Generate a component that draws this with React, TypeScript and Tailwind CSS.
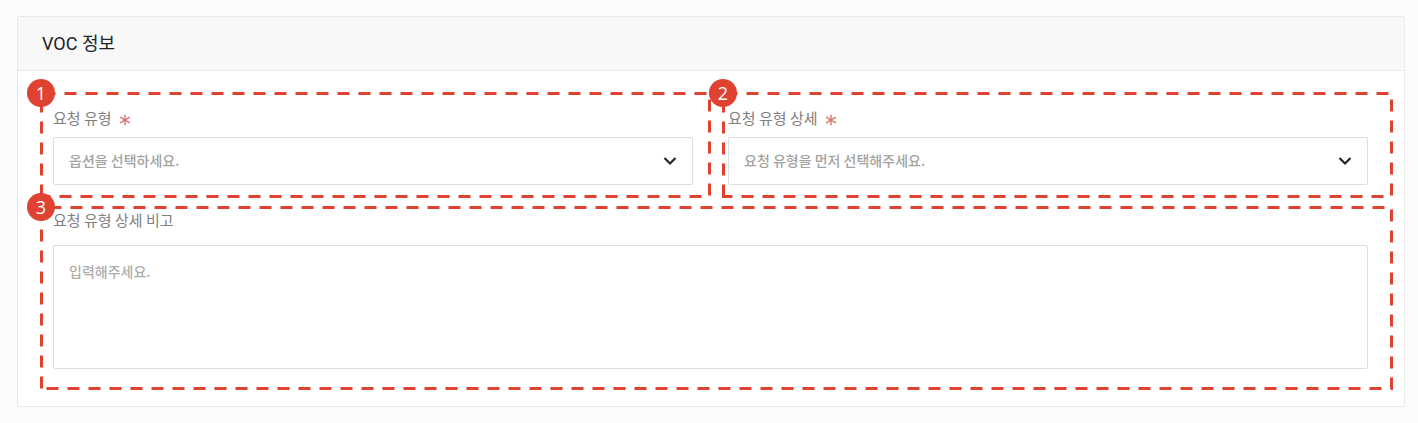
import { useLayoutEffect, useRef, useState, type ReactNode } from "react";

function DashedOutline() {
  const ref = useRef<SVGSVGElement>(null);
  const [size, setSize] = useState({ w: 0, h: 0 });

  useLayoutEffect(() => {
    const svg = ref.current;
    if (!svg) return;
    const measure = () => {
      const box = svg.getBoundingClientRect();
      setSize({ w: box.width, h: box.height });
    };
    measure();
    const observer = new ResizeObserver(measure);
    observer.observe(svg);
    return () => observer.disconnect();
  }, []);

  const right = size.w - 1.5;
  const bottom = size.h - 1.5;

  return (
    <svg ref={ref} aria-hidden="true" className="pointer-events-none absolute inset-0 h-full w-full">
      {size.w > 0 && (
        <path
          d={`M1.5 ${bottom}V1.5H${right}V${bottom}Z`}
          fill="none"
          stroke="#df4230"
          strokeWidth="3"
          strokeDasharray="12 9"
        />
      )}
    </svg>
  );
}

function Callout({ number, className, children }: { number: number; className: string; children: ReactNode }) {
  return (
    <div className={`relative ${className}`}>
      {children}
      <DashedOutline />
      <span className="absolute -left-[13px] -top-[13px] z-10 flex size-7 items-center justify-center rounded-full bg-[#df4230] font-['Open_Sans',sans-serif] text-lg font-normal leading-7 text-white">
        {number}
      </span>
    </div>
  );
}

function Label({ htmlFor, required, children }: { htmlFor: string; required?: boolean; children: ReactNode }) {
  return (
    <label htmlFor={htmlFor} className="flex items-center gap-[7px] text-[15px] leading-[22px] text-[#808080]">
      {children}
      {required && (
        <svg viewBox="0 0 12 12" role="img" aria-label="필수" className="mt-1 size-3">
          <path d="M6 0.8V11.2M1.2 3.2L10.8 8.8M1.2 8.8L10.8 3.2" stroke="#d9756b" strokeWidth="1.4" />
        </svg>
      )}
    </label>
  );
}

function SelectField({ id, placeholder }: { id: string; placeholder: string }) {
  return (
    <div className="relative mt-2">
      <select
        id={id}
        defaultValue=""
        className="block h-12 w-full appearance-none rounded-xs border border-[#dadfe4] bg-white pb-0.5 pl-[15px] pr-10 text-sm font-medium text-[#a3a3a3] outline-none"
      >
        <option value="">{placeholder}</option>
      </select>
      <svg viewBox="0 0 14 10" aria-hidden="true" className="pointer-events-none absolute right-4 top-[19px] h-2.5 w-3.5">
        <path d="M1.5 2L7 7.5L12.5 2" fill="none" stroke="#212529" strokeWidth="2.2" />
      </svg>
    </div>
  );
}

export default function App() {
  return (
    <main className="min-h-screen bg-[#fcfcfc] pb-4 pl-[17px] pr-[13px] pt-4 font-['Noto_Sans_CJK_KR',sans-serif]">
      <section className="rounded-xs border border-[#e6eaef] bg-white">
        <header className="border-b border-[#e6eaef] bg-[#f8f8f8] px-6 py-[13px]">
          <h1 className="font-[Roboto,'Noto_Sans_CJK_KR',sans-serif] text-lg leading-[27px] text-[#212529]">VOC 정보</h1>
        </header>
        <form className="grid grid-cols-2 gap-x-[11px] gap-y-2 pb-4 pl-[22px] pr-[11px] pt-[21px]">
          <Callout number={1} className="pb-[13px] pl-[13px] pr-[18px] pt-[15px]">
            <Label htmlFor="type" required>요청 유형</Label>
            <SelectField id="type" placeholder="옵션을 선택하세요." />
          </Callout>
          <Callout number={2} className="pb-[13px] pl-1.5 pr-[25px] pt-[15px]">
            <Label htmlFor="detail" required>요청 유형 상세</Label>
            <SelectField id="detail" placeholder="요청 유형을 먼저 선택해주세요." />
          </Callout>
          <Callout number={3} className="col-span-2 pb-[21px] pl-[13px] pr-[25px] pt-[3px]">
            <Label htmlFor="note">요청 유형 상세 비고</Label>
            <textarea
              id="note"
              placeholder="입력해주세요."
              className="mt-3.5 block h-[124px] w-full resize-none rounded-xs border border-[#dadfe4] bg-white px-[15px] py-[15px] text-sm font-medium leading-5 text-[#212529] outline-none placeholder:text-[#adadad]"
            />
          </Callout>
        </form>
      </section>
    </main>
  );
}
